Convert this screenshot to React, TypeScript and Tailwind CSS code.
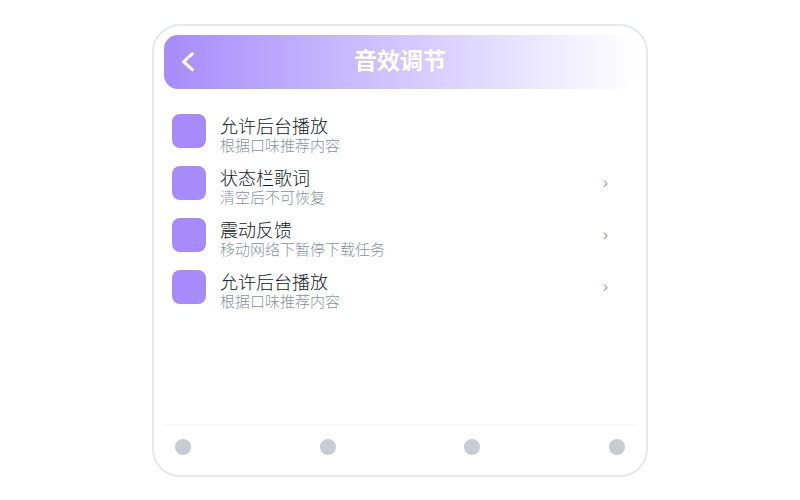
type Setting = {
    title: string
    description: string
    hasArrow?: boolean
}

const settings: Setting[] = [
    { title: "允许后台播放", description: "根据口味推荐内容" },
    { title: "状态栏歌词", description: "清空后不可恢复", hasArrow: true },
    { title: "震动反馈", description: "移动网络下暂停下载任务", hasArrow: true },
    { title: "允许后台播放", description: "根据口味推荐内容", hasArrow: true },
]

const tabs = ["首页", "发现", "音乐", "我的"]

function Header() {
    return (
        <header className="grid grid-cols-[48px_1fr_48px] items-center h-[54px] rounded-[14px] bg-linear-to-r from-[#a78bfa] to-white text-white">
            <button type="button" aria-label="返回" className="flex justify-center cursor-pointer">
                <svg className="size-6" viewBox="0 0 24 24" fill="none" stroke="currentColor" strokeWidth="3">
                    <path d="M17.3 2.800 7.700 11.700l9.600 8.900" />
                </svg>
            </button>
            <h1 className="text-center text-[23px] leading-8 font-bold pb-0.5">音效调节</h1>
        </header>
    )
}

function SettingRow({ title, description, hasArrow }: Setting) {
    return (
        <li>
            <button type="button" className="flex w-full items-center gap-3.5 h-[52px] pl-2 pr-7 text-left cursor-pointer">
                <span className="size-[34px] shrink-0 rounded-lg bg-[#a78bfa]" />
                <span className="flex-1 min-w-0 pt-2.5 font-light">
                    <span className="block text-lg leading-5 text-gray-900">{title}</span>
                    <span className="block text-[15px] leading-[18px] text-[#8a92a0]">{description}</span>
                </span>
                {hasArrow && <span className="text-base text-gray-400">›</span>}
            </button>
        </li>
    )
}

export default function App() {
    return (
        <div className="min-h-screen bg-white px-[152px] py-6 font-['Liberation_Sans','Noto_Sans_CJK_SC',sans-serif]">
            <main className="flex flex-col min-h-[453px] rounded-[28px] border-2 border-gray-200 px-2.5 pt-[9px]">
                <Header />
                <ul className="flex-1 pt-4">
                    {settings.map((item, index) => (
                        <SettingRow key={index} {...item} />
                    ))}
                </ul>
                <nav className="flex items-center justify-between h-[51px] border-t border-gray-100 px-[11px] pb-1.5">
                    {tabs.map((tab) => (
                        <button key={tab} type="button" aria-label={tab} className="size-4 rounded-full bg-[#c7cbd2] cursor-pointer" />
                    ))}
                </nav>
            </main>
        </div>
    )
}
